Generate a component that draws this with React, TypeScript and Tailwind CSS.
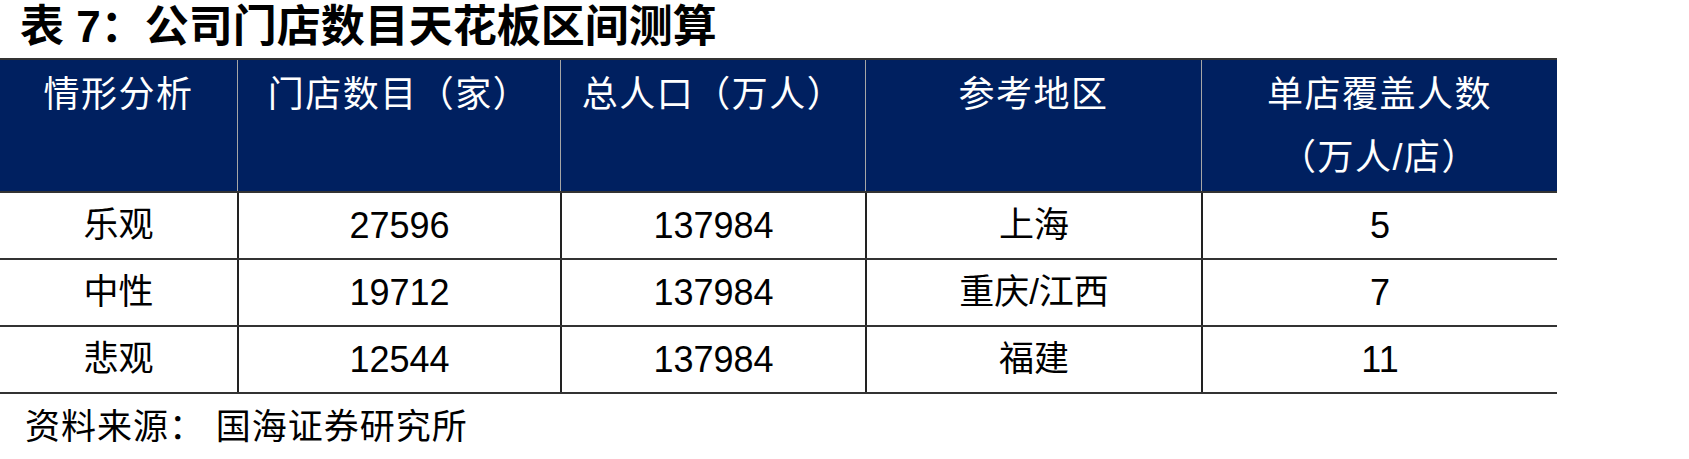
const headers = [
  ["情形分析"],
  ["门店数目（家）"],
  ["总人口（万人）"],
  ["参考地区"],
  ["单店覆盖人数", "（万人/店）"],
];

const rows = [
  ["乐观", "27596", "137984", "上海", "5"],
  ["中性", "19712", "137984", "重庆/江西", "7"],
  ["悲观", "12544", "137984", "福建", "11"],
];

const font = "font-['Liberation_Sans','Noto_Sans_CJK_SC',sans-serif]";

export default function App() {
  return (
    <div className={`w-[1689px] h-[459px] bg-white text-black ${font}`}>
      <h1 className="pl-[20px] pt-[1px] h-[58px] text-[44px] leading-[52px] font-bold">
        表 7：公司门店数目天花板区间测算
      </h1>

      <div className="w-[1557px] border-t-2 border-[#333]">
        <div className="grid grid-cols-[237px_323px_305px_336px_356px] bg-[#002060] border-b-2 border-[#333]">
          {headers.map((lines, i) => (
            <div
              key={i}
              className={`h-[131px] pt-[3px] text-center text-white text-[36px] leading-[63px] tracking-[1.5px] ${
                i > 0 ? "border-l border-[#a6a6a6]" : ""
              }`}
            >
              {lines.map((line) => (
                <div key={line}>{line}</div>
              ))}
            </div>
          ))}
        </div>

        {rows.map((row) => (
          <div
            key={row[0]}
            className="grid grid-cols-[237px_323px_305px_336px_356px] border-b-2 border-[#333]"
          >
            {row.map((cell, i) => {
              const numeric = /^\d+$/.test(cell);
              return (
                <div
                  key={i}
                  className={`h-[65px] flex items-center justify-center ${
                    numeric ? "text-[36px]" : "text-[35px]"
                  } ${i > 0 ? "border-l-2 border-[#222]" : ""}`}
                >
                  {cell}
                </div>
              );
            })}
          </div>
        ))}
      </div>

      <p className="mt-[8px] pl-[25px] text-[35px] leading-[50px] tracking-[1px]">资料来源： 国海证券研究所</p>
    </div>
  );
}
